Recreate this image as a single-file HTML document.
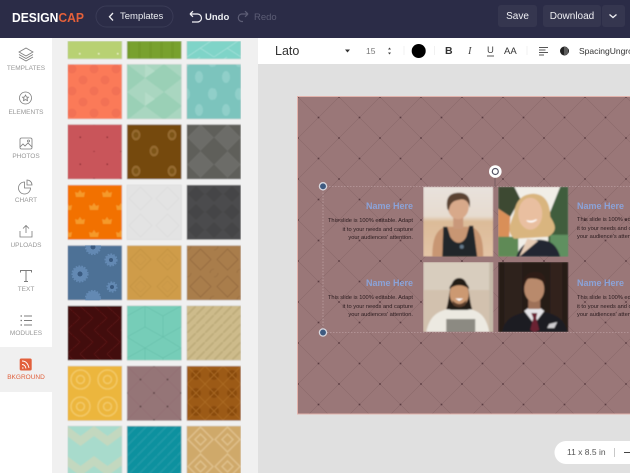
<!DOCTYPE html>
<html><head><meta charset="utf-8">
<style>
html,body{margin:0;padding:0;width:630px;height:473px;overflow:hidden;background:#e0e0e0;font-family:"Liberation Sans",sans-serif}
#root{position:absolute;left:0;top:0;width:630px;height:473px;overflow:hidden}
.a{position:absolute}
.t{position:absolute;white-space:nowrap}
.nav{position:absolute;left:0;width:52px;text-align:center;font-size:6.5px;color:#989898;white-space:nowrap}
.btn{position:absolute;background:#35364f;border-radius:3px;color:#f0f0f4;font-size:10px;text-align:center;top:5px;height:22px;line-height:23px}
.nm{position:absolute;font-size:9px;font-weight:bold;color:#8ba3d8;white-space:nowrap}
.bd{position:absolute;font-size:5.7px;color:#2a1b1e;white-space:nowrap;line-height:8.5px}
.r{text-align:right}
.clip{position:absolute;overflow:hidden;white-space:nowrap}
</style></head><body><div id="root">

<svg class="a" style="left:0;top:0" width="630" height="473" viewBox="0 0 630 473" xmlns="http://www.w3.org/2000/svg">
<defs>
<pattern id="bg" x="339" y="97" width="41" height="41" patternUnits="userSpaceOnUse">
<rect width="41" height="41" fill="#9a7778"/>
<path d="M0 0L41 41M41 0L0 41" stroke="#8a686a" stroke-width=".6" fill="none"/>
<circle cx="0" cy="0" r=".9" fill="#5a3c41"/><circle cx="41" cy="0" r=".9" fill="#5a3c41"/><circle cx="0" cy="41" r=".9" fill="#5a3c41"/><circle cx="41" cy="41" r=".9" fill="#5a3c41"/><circle cx="20.500" cy="20.500" r=".9" fill="#5a3c41"/>
</pattern>
<pattern id="p1" x="67" y="64" width="22" height="22" patternUnits="userSpaceOnUse"><rect width="22" height="22" fill="#fb7a59"/><circle cx="5" cy="5" r="4.500" fill="#f27154"/><circle cx="16" cy="16" r="4.500" fill="#f27154"/></pattern>
<pattern id="p2" x="127" y="64" width="37" height="28" patternUnits="userSpaceOnUse"><rect width="37" height="28" fill="#a9d6c0"/><path d="M0 0L18 14L0 28ZM37 0L18 14L37 28Z" fill="#9ad0b6"/><path d="M18 0L28 7L18 14Z" fill="#b4dcc8"/></pattern>
<pattern id="p3" x="187" y="68" width="27" height="33" patternUnits="userSpaceOnUse"><rect width="27" height="33" fill="#7cc4bd"/><ellipse cx="12" cy="9" rx="4" ry="6" fill="#90cfc9"/><ellipse cx="25" cy="26" rx="4" ry="6" fill="#90cfc9"/><ellipse cx="-1" cy="26" rx="4" ry="6" fill="#90cfc9"/></pattern>
<pattern id="p4" x="67" y="124" width="27" height="27" patternUnits="userSpaceOnUse"><rect width="27" height="27" fill="#c9555a"/><rect x="12.500" y="12.500" width="1.500" height="1.500" fill="#8d2f35"/><rect x="-.7" y="-.7" width="1.500" height="1.500" fill="#8d2f35"/><rect x="26.300" y="-.7" width="1.500" height="1.500" fill="#8d2f35"/></pattern>
<pattern id="p5" x="127" y="126" width="36" height="36" patternUnits="userSpaceOnUse"><rect width="36" height="36" fill="#744a10"/><ellipse cx="9" cy="9" rx="4.500" ry="5.500" fill="#94692e"/><ellipse cx="9" cy="9" rx="2.500" ry="3" fill="#7d5418"/><ellipse cx="27" cy="25" rx="4.500" ry="5.500" fill="#94692e"/><ellipse cx="27" cy="25" rx="2.500" ry="3" fill="#7d5418"/></pattern>
<pattern id="p6" x="187" y="124" width="27" height="27" patternUnits="userSpaceOnUse"><rect width="27" height="27" fill="#5e5e5a"/><path d="M13.500 0L27 13.500L13.500 27L0 13.500Z" fill="#6c6c67"/></pattern>
<pattern id="p7" x="67" y="187" width="27" height="27" patternUnits="userSpaceOnUse"><rect width="27" height="27" fill="#f27105"/><path d="M13 3l2 3 3-1-1 5h-8l-1-5 3 1z" fill="#f59a2c"/><path d="M0 16l2 3 3-1-1 5h-8l-1-5 3 1zM27 16l2 3 3-1-1 5h-8l-1-5 3 1z" fill="#f59a2c"/></pattern>
<pattern id="p8" x="127" y="185" width="27" height="27" patternUnits="userSpaceOnUse"><rect width="27" height="27" fill="#e3e3e3"/><path d="M13.500 2L25 13.500L13.500 25L2 13.500Z" fill="none" stroke="#dbdbdb" stroke-width=".7"/></pattern>
<pattern id="p9" x="187" y="185" width="18" height="18" patternUnits="userSpaceOnUse"><rect width="18" height="18" fill="#4b4b4d"/><path d="M9 1L17 9L9 17L1 9Z" fill="#444446"/></pattern>
<pattern id="p10" x="127" y="246" width="27" height="27" patternUnits="userSpaceOnUse"><rect width="27" height="27" fill="#cf9c4a"/><path d="M13.500 3L24 13.500L13.500 24L3 13.500Z" fill="none" stroke="#c1903f" stroke-width=".7"/><path d="M13.500 8L19 13.500L13.500 19L8 13.500Z" fill="none" stroke="#c1903f" stroke-width=".5"/></pattern>
<pattern id="p11" x="187" y="246" width="27" height="27" patternUnits="userSpaceOnUse"><rect width="27" height="27" fill="#a97d4c"/><path d="M13.500 3L24 13.500L13.500 24L3 13.500Z" fill="none" stroke="#93693d" stroke-width=".8"/><circle cx="0" cy="0" r="4" fill="none" stroke="#93693d" stroke-width=".6"/><circle cx="27" cy="27" r="4" fill="none" stroke="#93693d" stroke-width=".6"/></pattern>
<pattern id="p12" x="67" y="306" width="27" height="24" patternUnits="userSpaceOnUse"><rect width="27" height="24" fill="#430808"/><path d="M0 0L13 12L0 24M13 0L26 12L13 24" fill="none" stroke="#5f1a1a" stroke-width=".6"/></pattern>
<pattern id="p13" x="127" y="306" width="36" height="42" patternUnits="userSpaceOnUse"><rect width="36" height="42" fill="#76cdb8"/><path d="M0 10L18 0L36 10M18 0V21M0 10V31L18 42L36 31V10M0 31L18 21L36 31" fill="none" stroke="#66bfaa" stroke-width=".6"/></pattern>
<pattern id="p14" x="187" y="306" width="9" height="9" patternUnits="userSpaceOnUse"><rect width="9" height="9" fill="#cdbb8b"/><path d="M0 9L9 0" stroke="#bfad7c" stroke-width="2"/></pattern>
<pattern id="p15" x="67" y="366" width="27" height="27" patternUnits="userSpaceOnUse"><rect width="27" height="27" fill="#ecb63c"/><circle cx="13.500" cy="13.500" r="9.500" fill="none" stroke="#f3c865" stroke-width="1.500"/><circle cx="13.500" cy="13.500" r="4" fill="none" stroke="#f3c865" stroke-width="1.500"/></pattern>
<pattern id="p16" x="127" y="366" width="27" height="27" patternUnits="userSpaceOnUse"><rect width="27" height="27" fill="#957577"/><path d="M0 0L27 27M27 0L0 27" stroke="#8a6b6d" stroke-width=".4"/><circle cx="0" cy="0" r=".9" fill="#523a3e"/><circle cx="27" cy="0" r=".9" fill="#523a3e"/><circle cx="0" cy="27" r=".9" fill="#523a3e"/><circle cx="27" cy="27" r=".9" fill="#523a3e"/><circle cx="13.500" cy="13.500" r=".9" fill="#523a3e"/></pattern>
<pattern id="p17" x="187" y="366" width="18" height="18" patternUnits="userSpaceOnUse"><rect width="18" height="18" fill="#9c5a18"/><circle cx="9" cy="9" r="5" fill="#8a4c10"/><path d="M0 0L18 18M18 0L0 18" stroke="#ab6b24" stroke-width=".8"/></pattern>
<pattern id="p18" x="67" y="426" width="27" height="30" patternUnits="userSpaceOnUse"><rect width="27" height="30" fill="#a8dbcc"/><path d="M0 0L13.500 10V20L0 10ZM27 0L13.500 10V20L27 10Z" fill="#c3d8bf"/></pattern>
<pattern id="p19" x="127" y="426" width="10" height="10" patternUnits="userSpaceOnUse"><rect width="10" height="10" fill="#10919f"/><path d="M0 10L10 0" stroke="#1a98a6" stroke-width="2"/></pattern>
<pattern id="p20" x="187" y="426" width="27" height="27" patternUnits="userSpaceOnUse"><rect width="27" height="27" fill="#cfa96b"/><path d="M13.500 1L26 13.500L13.500 26L1 13.500ZM13.500 8L19 13.500L13.500 19L8 13.500Z" fill="none" stroke="#dfc08a" stroke-width="1.500"/></pattern>
<pattern id="g1" x="67" y="41" width="19" height="18" patternUnits="userSpaceOnUse"><rect width="19" height="18" fill="#b8d173"/><rect x="12" y="12" width="1.500" height="1.500" fill="#eef2c8"/></pattern>
<pattern id="g2" x="127" y="41" width="11" height="11" patternUnits="userSpaceOnUse"><rect width="11" height="11" fill="#78a12f"/><rect width="3" height="11" fill="#739b2c"/></pattern>
<pattern id="g3" x="187" y="30" width="27" height="27" patternUnits="userSpaceOnUse"><rect width="27" height="27" fill="#7fd4c8"/><path d="M0 27L27 9M0 9L13 0" stroke="#a0e0d8" stroke-width=".8"/><path d="M13 18L27 27" stroke="#a0e0d8" stroke-width=".8"/></pattern>
<filter id="sb" x="0" y="0" width="100%" height="100%"><feGaussianBlur stdDeviation=".4"/></filter>
<filter id="ph" x="0" y="0" width="100%" height="100%"><feGaussianBlur stdDeviation=".8"/></filter>
<linearGradient id="sky1" x1="0" y1="0" x2="0" y2="1"><stop offset="0" stop-color="#e8e2dc"/><stop offset=".42" stop-color="#e6dbcf"/><stop offset=".5" stop-color="#dcbb98"/><stop offset="1" stop-color="#e3c4a6"/></linearGradient>
</defs>

<!-- header -->
<rect x="0" y="0" width="630" height="38" fill="#2b2c47"/>

<!-- side + panel -->
<rect x="0" y="38" width="52" height="435" fill="#fff"/>
<rect x="52" y="38" width="206" height="435" fill="#f0f0f0"/>
<rect x="0" y="347" width="52" height="45" fill="#f0f0f0"/>

<!-- thumbs -->
<g stroke="#d8d8d8" stroke-width=".5" filter="url(#sb)">
<rect x="67.500" y="41" width="54.500" height="18" fill="url(#g1)"/><rect x="127" y="41" width="54.500" height="18" fill="url(#g2)"/><rect x="186.700" y="41" width="54.300" height="18" fill="url(#g3)"/>
<rect x="67.500" y="64.300" width="54.500" height="54.700" fill="url(#p1)"/><rect x="127" y="64.300" width="54.500" height="54.700" fill="url(#p2)"/><rect x="186.700" y="64.300" width="54.300" height="54.700" fill="url(#p3)"/>
<rect x="67.500" y="124.500" width="54.500" height="54.700" fill="url(#p4)"/><rect x="127" y="124.500" width="54.500" height="54.700" fill="url(#p5)"/><rect x="186.700" y="124.500" width="54.300" height="54.700" fill="url(#p6)"/>
<rect x="67.500" y="185" width="54.500" height="54.700" fill="url(#p7)"/><rect x="127" y="185" width="54.500" height="54.700" fill="url(#p8)"/><rect x="186.700" y="185" width="54.300" height="54.700" fill="url(#p9)"/>
<rect x="67.500" y="245.500" width="54.500" height="54.700" fill="#4d7196"/><rect x="127" y="245.500" width="54.500" height="54.700" fill="url(#p10)"/><rect x="186.700" y="245.500" width="54.300" height="54.700" fill="url(#p11)"/>
<rect x="67.500" y="305.700" width="54.500" height="54.700" fill="url(#p12)"/><rect x="127" y="305.700" width="54.500" height="54.700" fill="url(#p13)"/><rect x="186.700" y="305.700" width="54.300" height="54.700" fill="url(#p14)"/>
<rect x="67.500" y="366" width="54.500" height="54.700" fill="url(#p15)"/><rect x="127" y="366" width="54.500" height="54.700" fill="url(#p16)"/><rect x="186.700" y="366" width="54.300" height="54.700" fill="url(#p17)"/>
<rect x="67.500" y="426" width="54.500" height="50" fill="url(#p18)"/><rect x="127" y="426" width="54.500" height="50" fill="url(#p19)"/><rect x="186.700" y="426" width="54.300" height="50" fill="url(#p20)"/>
</g>
<!-- flowers on blue thumb -->
<svg x="67.500" y="245.500" width="54.500" height="54.700" viewBox="67.500 245.500 54.500 54.700">
<g fill="#6389b3" stroke="#6389b3" stroke-width="2.200" stroke-dasharray="1.600 1.200">
<circle cx="80" cy="274" r="7.500"/><circle cx="111" cy="260" r="5.500"/><circle cx="112" cy="287" r="4.500"/><circle cx="93" cy="298" r="7"/><circle cx="93" cy="247" r="7"/>
</g>
<g fill="#3a5a80"><circle cx="80" cy="274" r="2.500"/><circle cx="111" cy="260" r="2"/><circle cx="112" cy="287" r="2"/><circle cx="93" cy="247" r="2.500"/></g>
</svg>

<!-- toolbar -->
<rect x="258" y="38" width="372" height="26" fill="#fff"/>
<rect x="258" y="64" width="372" height="409" fill="#e0e0e0"/>

<!-- canvas -->
<rect x="298" y="97" width="332" height="316.500" fill="url(#bg)"/>
<path d="M630 96.500H297.500V414H630" fill="none" stroke="#e2b3ac" stroke-width="1"/>

<!-- selection -->
<path d="M323 186.500H630M323 186.500V332.500H630" fill="none" stroke="#c7adb0" stroke-width=".6" stroke-dasharray="1.500 1.500"/>
<line x1="495" y1="178" x2="495" y2="187" stroke="#5e4a50" stroke-width=".6"/>

<!-- photos -->
<svg x="423" y="186.700" width="70.500" height="70" viewBox="0 0 70 70">
<g filter="url(#ph)">
<rect width="70" height="70" fill="url(#sky1)"/>
<path d="M9 70C9 50 14 42 23 40L47 40C56 42 60 50 60 70Z" fill="#c89673"/>
<path d="M19 70L20 40H24L27 50C32 58 39 58 43 50L46 39H50L54 70Z" fill="#23262a"/>
<circle cx="38.500" cy="60" r="2" fill="#64788a"/>
<rect x="30" y="28" width="10" height="14" fill="#c9987a"/>
<ellipse cx="35" cy="20" rx="10.500" ry="12.500" fill="#d8a98a"/>
<path d="M24 22C22 9 28 6 36 6C44 6 48 11 46.500 21C45 13 40 12 36 13C31 14 27 15 25.500 24Z" fill="#5a4230"/>
</g></svg>
<svg x="498" y="186.700" width="70.500" height="70" viewBox="0 0 70 70">
<g filter="url(#ph)">
<rect width="70" height="70" fill="#f1eee7"/>
<path d="M0 0H16L22 12 12 30 0 22Z" fill="#3d4a33"/><path d="M0 22L12 30 10 70H0Z" fill="#d98f58"/><path d="M0 50H20V70H0Z" fill="#5f8a56"/>
<path d="M62 0H70V70H50V30Z" fill="#3f5d3d"/><path d="M52 48H70V70H52Z" fill="#5f9060"/>
<path d="M16 52C7 44 13 36 16 26C18 10 28 7 36 7C50 8 52 22 52 30C57 38 60 44 50 50Z" fill="#d9b57f"/>
<ellipse cx="32" cy="27" rx="12" ry="16" fill="#e9bfa0"/>
<path d="M28 34Q33 38 39 33L38 32.500Q33 35 29 33.500Z" fill="#fff"/>
<path d="M18 70C22 58 30 54 40 53C50 53 58 56 62 70Z" fill="#222630"/>
<path d="M21 70L29 52L40 54Z" fill="#e5cbb5"/>
</g></svg>
<svg x="423" y="262" width="70.500" height="70" viewBox="0 0 70 70">
<g filter="url(#ph)">
<rect width="70" height="70" fill="#d8cdbe"/>
<rect y="28" width="70" height="42" fill="#d2c1ae"/>
<rect x="66" width="4" height="70" fill="#c4b9a8"/>
<path d="M3 70C6 54 15 49 25 47L46 47C56 49 63 54 66 70Z" fill="#ece9e1"/>
<rect x="23" y="57" width="29" height="13" fill="#8c8a82"/>
<path d="M28 48C26 47 25 48 23 47C27 36 25 16 36 16C47 16 45 36 49 47C47 48 46 47 44 48Z" fill="#241b15"/>
<ellipse cx="36" cy="32" rx="9.500" ry="12.500" fill="#cc9972"/>
<path d="M29 38Q36 46 43 38L42 43Q36 47 30 43Z" fill="#5a3e2c"/>
<path d="M32 36.500H40L36 39Z" fill="#fff"/>
<path d="M26 27C27 17 45 17 46 27C40 22 32 22 26 27Z" fill="#241b15"/>
</g></svg>
<svg x="498" y="262" width="70.500" height="70" viewBox="0 0 70 70">
<g filter="url(#ph)">
<rect width="70" height="70" fill="#251a18"/>
<rect x="6" width="18" height="70" fill="#2d211e"/><rect x="52" y="0" width="12" height="70" fill="#30241e"/>
<path d="M4 70C6 56 18 52 28 50L46 50C56 52 66 56 69 70Z" fill="#1c1b24"/>
<path d="M26 49L36 62 46 49 42 46H30Z" fill="#e5e3e6"/>
<path d="M33 51H39L38 56 41 68 36 70 32 68 35 56Z" fill="#6b2433"/>
<path d="M51 62L59 60 56 66 49 66Z" fill="#cfcdd0"/>
<rect x="30" y="36" width="12" height="11" fill="#9e7159"/>
<ellipse cx="36" cy="27" rx="10" ry="13" fill="#b98a6c"/>
<path d="M25 26C24 12 32 10 38 10C46 10 48 17 47 23C44 16 34 16 29 17C27 19 27 23 25 26Z" fill="#2e1f17"/>
</g></svg>

<!-- handles -->
<circle cx="323" cy="186.300" r="3.600" fill="#3e5a80" stroke="#d7d7de" stroke-width="1.300"/>
<circle cx="323" cy="332.500" r="3.600" fill="#3e5a80" stroke="#d7d7de" stroke-width="1.300"/>
<circle cx="495.300" cy="171.500" r="6.300" fill="#fff"/>
<circle cx="495.300" cy="171.500" r="3" fill="none" stroke="#556" stroke-width="1.200"/>

<!-- nav icons -->
<g fill="none" stroke="#7c7c7c" stroke-width=".8">
<path d="M26 48L33 52 26 56 19 52ZM19 54.500L26 58.500 33 54.500M19 57L26 61 33 57"/>
<circle cx="25.500" cy="98" r="6"/><path d="M25.500 95l1 2 2 .2-1.500 1.400.5 2-2-1-2 1 .5-2-1.500-1.400 2-.2z"/>
<rect x="20" y="138" width="12" height="11" rx="1.500"/><path d="M20 147l3-3 2 2 3-3 4 4"/><circle cx="28.500" cy="141" r="1"/>
<path d="M24.500 182a6 6 0 1 0 6 6h-6zM27 180a5 5 0 0 1 5 5h-5z"/>
<path d="M20 231v6h12v-6M26 233v-7M23 228.500l3-3 3 3"/>
<path d="M20.500 272.500v-2h11v2M26 270.500v11M24 281.500h4" stroke-width="1"/>
<path d="M24 316h8M24 320.500h8M24 325h8" stroke-width=".9"/>
<path d="M20.500 316h1.500M20.500 320.500h1.500M20.500 325h1.500" stroke-width="1.300"/>
</g>
<rect x="19.700" y="358.500" width="12" height="12" rx="1.500" fill="#e2603c"/>
<path d="M22 361c3.500 0 6 2.500 7 7M22 364.500c2 0 3.500 1.500 4 4M22 368l1.500 0" stroke="#fff" stroke-width=".9" fill="none"/>

<!-- header icons -->
<path d="M190 14h7.500a4 4 0 0 1 0 8H192M190 14l3-2.800M190 14l3 2.800" stroke="#f0f0f4" stroke-width="1.200" fill="none"/>
<path d="M248 14h-6.500a3.800 3.800 0 0 0 0 7.500H243M248 14l-3-2.800M248 14l-3 2.800" stroke="#5c5d75" stroke-width="1.200" fill="none"/>
<rect x="96" y="6" width="77" height="21" rx="10.500" fill="#2b2c47" stroke="#3a3b56" stroke-width="1"/>
<path d="M113 13l-3.500 3.800L113 20.500" stroke="#f0f0f4" stroke-width="1.300" fill="none"/>

<!-- toolbar icons -->
<path d="M345 49.500h5l-2.500 3z" fill="#333"/>
<path d="M388 49.500l1.500-2 1.500 2zM388 52.500l1.500 2 1.500-2z" fill="#444"/>
<circle cx="418.700" cy="51" r="7" fill="#000"/>
<path d="M404 46v9M434.500 46v9M527 46v9" stroke="#eee" stroke-width=".8"/>
<path d="M539 47.500h9M539 50h6.500M539 52.500h9M539 55h5" stroke="#555" stroke-width=".9"/>
<circle cx="564.500" cy="51" r="4.500" fill="#222"/><path d="M565 47v8M567 47.500v7" stroke="#ddd" stroke-width=".6"/>
<path d="M487 56h7" stroke="#444" stroke-width=".9"/>
<!-- zoom pill -->
<path d="M630 441H566a11.500 11.500 0 0 0 0 23H630Z" fill="#fff"/>
<path d="M614.500 448v9" stroke="#bbb" stroke-width=".8"/>
<path d="M624 452.500h6" stroke="#444" stroke-width="1"/>
</svg>

<!-- logo -->
<div class="t" style="left:12px;top:10px;font-size:13px;font-weight:bold;color:#fff;line-height:15px;transform:scaleX(.93);transform-origin:0 0">DESIGN<span style="color:#e4603a">CAP</span></div>
<div class="t" style="left:120px;top:10px;font-size:9.500px;color:#eceef2;line-height:13px">Templates</div>
<div class="t" style="left:205px;top:11px;font-size:9.500px;font-weight:bold;color:#eceef2;line-height:13px">Undo</div>
<div class="t" style="left:254px;top:11px;font-size:9.500px;color:#5c5d75;line-height:13px">Redo</div>
<div class="btn" style="left:498px;width:39px">Save</div>
<div class="btn" style="left:543px;width:58px">Download</div>
<div class="btn" style="left:602px;width:23px"></div>
<svg class="a" style="left:602px;top:5px" width="23" height="22"><path d="M7.500 9.500l3.500 3 3.500-3" stroke="#f0f0f4" stroke-width="1.300" fill="none"/></svg>

<!-- nav -->
<div class="nav" style="top:65px">TEMPLATES</div>
<div class="nav" style="top:109px">ELEMENTS</div>
<div class="nav" style="top:153px">PHOTOS</div>
<div class="nav" style="top:197px">CHART</div>
<div class="nav" style="top:242px">UPLOADS</div>
<div class="nav" style="top:286px">TEXT</div>
<div class="nav" style="top:330px">MODULES</div>
<div class="nav" style="top:374px;color:#e0603c">BKGROUND</div>

<!-- toolbar text -->
<div class="t" style="left:275px;top:44px;font-size:12.500px;color:#333;line-height:15px">Lato</div>
<div class="t" style="left:366px;top:46px;font-size:8.500px;color:#777;line-height:11px">15</div>
<div class="t" style="left:445px;top:45px;font-size:10.500px;font-weight:bold;color:#333;line-height:13px">B</div>
<div class="t" style="left:468px;top:45px;font-size:10.500px;font-style:italic;font-family:'Liberation Serif',serif;color:#444;line-height:13px">I</div>
<div class="t" style="left:487px;top:45px;font-size:9.500px;color:#444;line-height:12px">U</div>
<div class="t" style="left:504px;top:46px;font-size:9.500px;color:#333;line-height:12px">AA</div>
<div class="clip" style="left:579px;top:46px;width:51px;height:11px;font-size:8.500px;color:#333;line-height:11px">SpacingUngroup</div>

<!-- canvas text -->
<div class="nm r" style="left:333px;width:80px;top:201px">Name Here</div>
<div class="bd r" style="left:313px;width:100px;top:217px">This slide is 100% editable. Adapt<br>it to your needs and capture<br>your audiences' attention.</div>
<div class="nm r" style="left:333px;width:80px;top:278px">Name Here</div>
<div class="bd r" style="left:313px;width:100px;top:294px">This slide is 100% editable. Adapt<br>it to your needs and capture<br>your audiences' attention.</div>
<div class="clip nm" style="left:577px;top:201px;width:53px">Name Here</div>
<div class="clip bd" style="left:577px;top:216px;width:53px">This slide is 100% editable. Adapt<br>it to your needs and capture<br>your audience's attention.</div>
<div class="clip nm" style="left:577px;top:278px;width:53px">Name Here</div>
<div class="clip bd" style="left:577px;top:294px;width:53px">This slide is 100% editable. Adapt<br>it to your needs and capture<br>your audiences' attention.</div>

<div class="t" style="left:567px;top:447px;font-size:8.500px;color:#555;line-height:11px">11 x 8.5 in</div>
</div></body></html>
